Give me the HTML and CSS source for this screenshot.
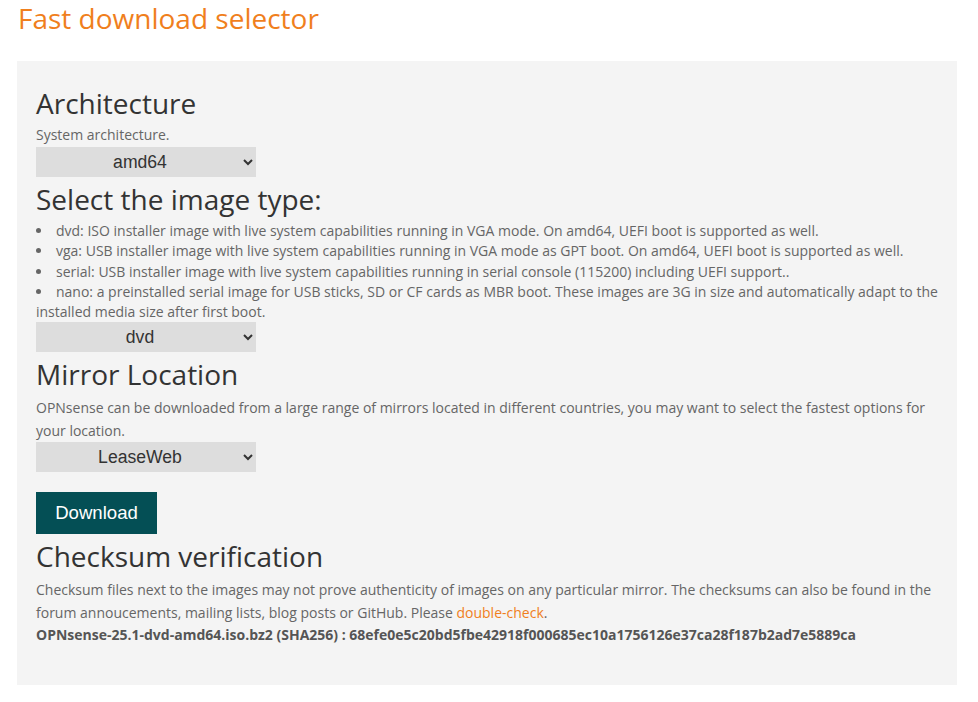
FILE: index.html
```html
<!DOCTYPE html>
<html>
<head>
<meta charset="utf-8">
<link rel="stylesheet" href="styles.css">
</head>
<body>
<h1 class="title">Fast download selector</h1>
<div class="panel">
  <h2 class="heading">Architecture</h2>
  <p class="help">System architecture.</p>
  <select class="picker"><option>amd64</option></select>
  <h2 class="heading">Select the image type:</h2>
  <ul class="types">
    <li>dvd: ISO installer image with live system capabilities running in VGA mode. On amd64, UEFI boot is supported as well.</li>
    <li>vga: USB installer image with live system capabilities running in VGA mode as GPT boot. On amd64, UEFI boot is supported as well.</li>
    <li>serial: USB installer image with live system capabilities running in serial console (115200) including UEFI support..</li>
    <li>nano: a preinstalled serial image for USB sticks, SD or CF cards as MBR boot. These images are 3G in size and automatically adapt to the installed media size after first boot.</li>
  </ul>
  <select class="picker"><option>dvd</option></select>
  <h2 class="heading">Mirror Location</h2>
  <p class="text">OPNsense can be downloaded from a large range of mirrors located in different countries, you may want to select the fastest options for your location.</p>
  <select class="picker"><option>LeaseWeb</option></select>
  <div class="actions"><button class="download">Download</button></div>
  <h2 class="heading">Checksum verification</h2>
  <p class="text">Checksum files next to the images may not prove authenticity of images on any particular mirror. The checksums can also be found in the forum annoucements, mailing lists, blog posts or GitHub. Please <a href="#" class="link">double-check</a>.</p>
  <p class="sum">OPNsense-25.1-dvd-amd64.iso.bz2 (SHA256) : 68efe0e5c20bd5fbe42918f000685ec10a1756126e37ca28f187b2ad7e5889ca</p>
</div>
</body>
</html>
```
FILE: styles.css
```css
html, body {
  margin: 0;
  padding: 0;
  background: #fff;
  font-family: "Open Sans", "Liberation Sans", sans-serif;
  color: #666;
}
.title {
  margin: 0;
  padding: 0 0 0 18px;
  font-size: 28px;
  font-weight: 400;
  line-height: 36px;
  color: #f07f1d;
}
.panel {
  width: 902px;
  margin: 25px 0 17px 17px;
  padding: 20px 19px 39px 19px;
  background: #f4f4f4;
}
.heading {
  margin: 4px 0 4px;
  font-size: 28px;
  font-weight: 400;
  line-height: 36px;
  color: #333;
}
.help {
  margin: 0 0 2px;
  font-size: 14px;
  line-height: 20px;
}
.picker {
  display: block;
  width: 220px;
  height: 30px;
  border: none;
  border-radius: 0;
  background-color: #ddd;
  color: #333;
  font-family: "Liberation Sans", Arial, sans-serif;
  font-size: 17.6px;
  text-align: center;
  text-align-last: center;
  padding: 0 4px;
}
.types {
  margin: 0;
  padding: 0;
  list-style: inside disc;
  font-size: 14px;
  line-height: 20.25px;
}
.types li::marker {
  color: #666;
}
.text {
  margin: 0;
  font-size: 14px;
  line-height: 23px;
}
.actions {
  margin-top: 20px;
}
.download {
  display: block;
  width: 121px;
  height: 42px;
  border: none;
  border-radius: 0;
  background: #044f55;
  color: #fff;
  font-family: "Liberation Sans", Arial, sans-serif;
  font-size: 18.6px;
  padding: 0;
}
.link {
  color: #f07f1d;
  text-decoration: none;
}
.sum {
  margin: 0;
  font-size: 14px;
  font-weight: 700;
  line-height: 22px;
  color: #555;
}
```
